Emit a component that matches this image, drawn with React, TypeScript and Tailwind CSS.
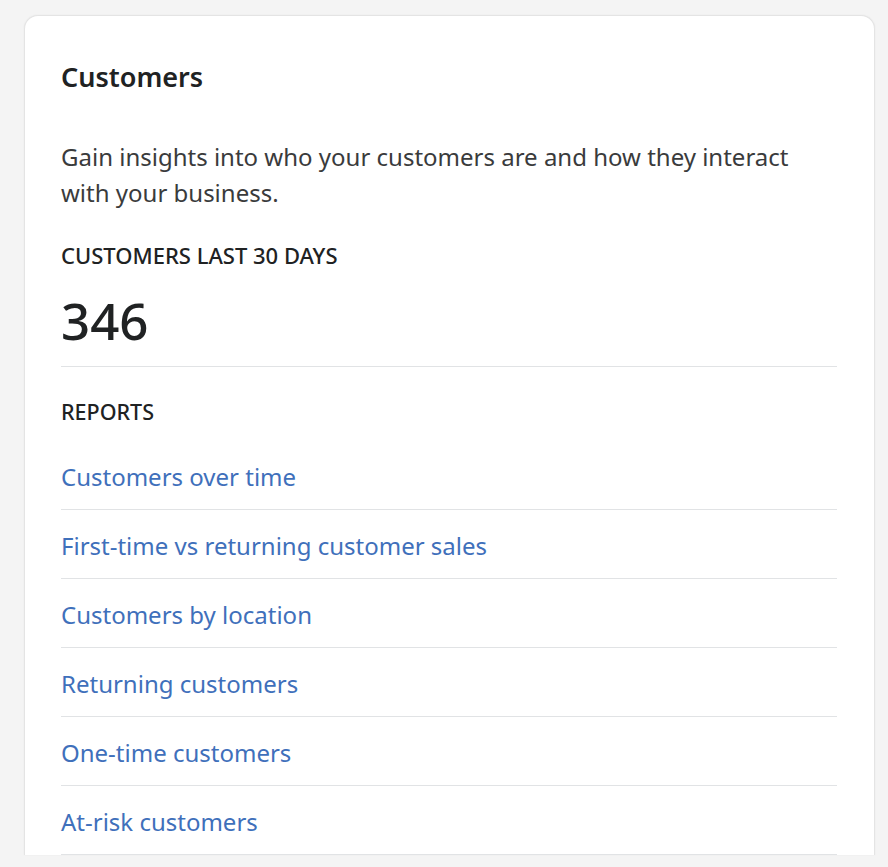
const reports = [
  "Customers over time",
  "First-time vs returning customer sales",
  "Customers by location",
  "Returning customers",
  "One-time customers",
  "At-risk customers",
];

export default function App() {
  return (
    <div
      className="min-h-screen bg-[#f4f4f4] pt-[15px] pl-[24px] pr-[13px]"
      style={{ fontFamily: '"Noto Sans", "Open Sans", sans-serif' }}
    >
      <div className="rounded-t-[14px] border border-b-0 border-[#e4e4e4] bg-white pt-[43px] pl-[36px] pr-[37px] shadow-[0_0_2px_rgba(0,0,0,0.06)]">
        <h2 className="text-[27px] leading-[36px] font-semibold text-[#202223]">Customers</h2>

        <p className="mt-[44px] text-[24px] leading-[36px] text-[#3a3b3c]">
          Gain insights into who your customers are and how they interact with your business.
        </p>

        <div className="mt-[30px] text-[22px] leading-[28px] font-medium uppercase text-[#202223]">
          Customers last 30 days
        </div>

        <div className="mt-[21px] text-[51px] leading-[60px] font-medium text-[#202223]">346</div>

        <div className="mt-[16px] border-t border-[#e1e3e5]" />

        <div className="mt-[31px] text-[21.5px] leading-[28px] font-medium uppercase text-[#202223]">Reports</div>

        <ul className="mt-[15px]">
          {reports.map((r) => (
            <li key={r} className="border-b border-[#e1e3e5] pt-[18px] pb-[14px]">
              <a href="#" className="block text-[24px] leading-[36px] text-[#3f70bb]">
                {r}
              </a>
            </li>
          ))}
        </ul>
      </div>
    </div>
  );
}
